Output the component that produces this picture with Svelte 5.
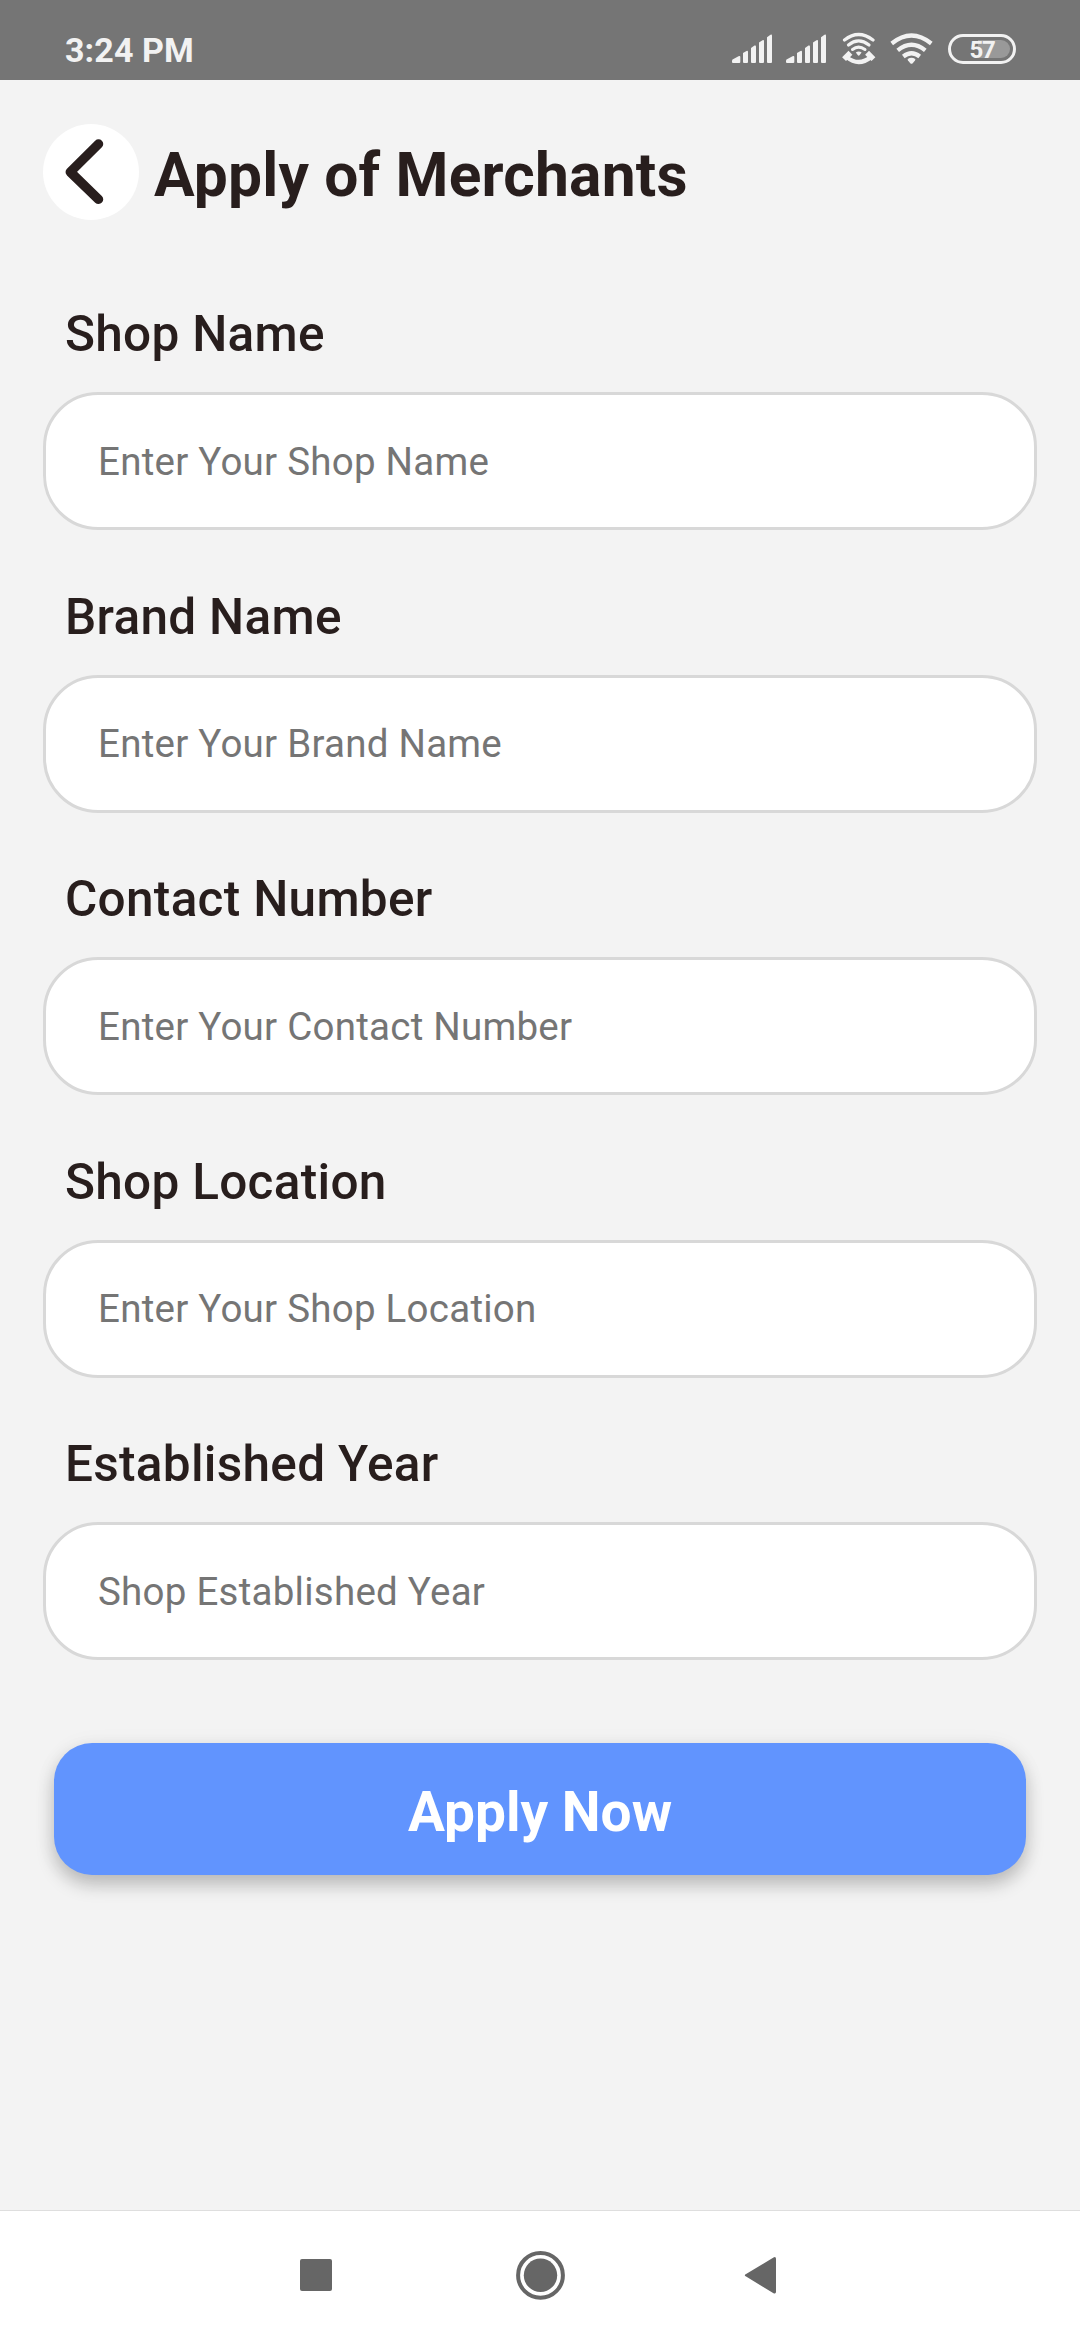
<script>
  const fields = [
    { id: 'shop', label: 'Shop Name', hint: 'Enter Your Shop Name' },
    { id: 'brand', label: 'Brand Name', hint: 'Enter Your Brand Name' },
    { id: 'contact', label: 'Contact Number', hint: 'Enter Your Contact Number' },
    { id: 'location', label: 'Shop Location', hint: 'Enter Your Shop Location' },
    { id: 'year', label: 'Established Year', hint: 'Shop Established Year' }
  ];
</script>

{#snippet signal()}
  <svg class="signal" width="41" height="30" viewBox="0 0 41 30">
    <path d="M0.5 25.5L7 22Q8.3 21.600 8.300 23V28Q8.300 29 7.300 29H1Q0 29 0 28V26.500Z" />
    <path d="M11 19L14.500 17Q16 16.300 16 18V28Q16 29 15 29H12Q11 29 11 28Z" />
    <path d="M19 14L22.500 11.600Q24 11 24 12.500V28Q24 29 23 29H20Q19 29 19 28Z" />
    <path d="M27 8.500L30.500 6.300Q32 5.600 32 7V28Q32 29 31 29H28Q27 29 27 28Z" />
    <path d="M35 3.300L38.500 0.700Q40 0 40 1.500V28Q40 29 39 29H36Q35 29 35 28Z" />
  </svg>
{/snippet}

<div class="screen">
  <div class="status">
    <span class="time">3:24 PM</span>
    <div class="indicators">
      {@render signal()}
      <span class="second">{@render signal()}</span>
      <svg class="wificall" width="34" height="33" viewBox="0 0 34 33">
        <g fill="none" stroke="#f2f2f2" stroke-linecap="round">
          <path d="M2.500 8Q16.500 -3 31 8" stroke-width="3.200" />
          <path d="M6.500 13Q16.500 4.900 27 13" stroke-width="3.200" />
          <path d="M10.500 17.500Q16.500 12.800 23 17.500" stroke-width="3" />
          <path d="M4.500 25Q16.700 35 29 25" stroke-width="4.200" stroke-linecap="butt" />
          <path d="M4 25.200L6.500 22.700M29.500 25.200L27 22.700" stroke-width="5.500" stroke-linecap="square" />
        </g>
        <path d="M13.800 20.500Q16.700 18.300 19.600 20.500L17.700 23.100Q16.700 24.200 15.700 23.100Z" />
      </svg>
      <svg class="wifi" width="43" height="32" viewBox="0 0 43 32">
        <g fill="none" stroke="#f2f2f2" stroke-width="4.200" stroke-linecap="butt">
          <path d="M1.700 10.500Q21.500 -5.500 41.300 10.500" />
          <path d="M7.700 17.300Q21.500 6.200 35.300 17.300" />
          <path d="M13.300 23.500Q21.500 17 29.700 23.500" />
        </g>
        <path d="M17.700 26Q21.500 23.500 25.300 26Q25.500 26.800 25 27.500L22.700 30.200Q21.500 31.300 20.300 30.200L18 27.500Q17.500 26.800 17.700 26Z" />
      </svg>
      <div class="battery"><i class="level"></i><span>57</span></div>
    </div>
  </div>

  <main>
    <header>
      <button class="back" aria-label="Back">
        <svg width="96" height="96" viewBox="0 0 96 96">
          <path d="M55.500 20L27.300 48L55.500 75.300" />
        </svg>
      </button>
      <h1>Apply of Merchants</h1>
    </header>

    <form>
      {#each fields as field (field.id)}
        <div class="field">
          <label for={field.id}>{field.label}</label>
          <input id={field.id} type="text" placeholder={field.hint} />
        </div>
      {/each}
      <button class="apply" type="button">Apply Now</button>
    </form>
  </main>

  <nav>
    <svg width="1080" height="129" viewBox="0 0 1080 129">
      <rect x="300" y="48" width="32" height="32" rx="2" />
      <circle cx="540.500" cy="64.300" r="22.400" fill="none" stroke="#666" stroke-width="4" />
      <circle cx="540.500" cy="64.300" r="16.700" />
      <path d="M746.500 65.800L773.500 82.200Q776 83.300 776 80.800V47.800Q776 45.300 773.500 46.400L746.500 62.800Q743 64.300 746.500 65.800Z" />
    </svg>
  </nav>
</div>

<style>
  :global(body) {
    margin: 0;
    background: #f3f3f3;
  }
  .screen {
    box-sizing: border-box;
    width: 1080px;
    height: 2340px;
    display: flex;
    flex-direction: column;
    overflow: hidden;
    background: #f3f3f3;
    color: #281e1d;
    font-family: Roboto, sans-serif;
  }
  .status {
    box-sizing: border-box;
    flex: none;
    height: 80px;
    padding: 30px 64px 0 65px;
    display: flex;
    justify-content: space-between;
    background: #757575;
    color: #f2f2f2;
  }
  .time {
    font-size: 34px;
    line-height: 40px;
    font-weight: 700;
    letter-spacing: 0.1px;
  }
  .indicators {
    display: flex;
    align-items: flex-start;
  }
  svg {
    display: block;
    fill: #f2f2f2;
  }
  .signal {
    margin-top: 4px;
  }
  .second {
    margin-left: 13px;
  }
  .wificall {
    margin: 2px 0 0 15px;
  }
  .wifi {
    margin: 3px 0 0 14px;
  }
  .battery {
    box-sizing: border-box;
    position: relative;
    width: 68px;
    height: 30px;
    margin: 4px 0 0 15px;
    border: 3px solid #f2f2f2;
    border-radius: 15px;
    text-align: center;
    font-size: 24px;
    line-height: 26px;
    font-weight: 700;
    letter-spacing: -1.200px;
  }
  .battery span {
    position: relative;
  }
  .level {
    position: absolute;
    left: 27px;
    right: 3px;
    top: 3px;
    bottom: 3px;
    border-radius: 0 9px 9px 0;
    background: #999;
  }
  main {
    flex: 1;
    padding: 44px 43px 0;
  }
  header {
    display: flex;
    align-items: center;
    gap: 15px;
    height: 96px;
  }
  button {
    border: 0;
    padding: 0;
    font-family: inherit;
  }
  .back {
    width: 96px;
    height: 96px;
    border-radius: 50%;
    background: #fff;
  }
  .back path {
    fill: none;
    stroke: #281e1d;
    stroke-width: 9.500;
    stroke-linecap: round;
    stroke-linejoin: round;
  }
  h1 {
    margin: 6px 0 0;
    font-size: 60.500px;
    line-height: 71px;
    font-weight: 700;
    letter-spacing: 0.170px;
    white-space: nowrap;
  }
  form {
    display: flex;
    flex-direction: column;
    padding-top: 85px;
  }
  .field {
    height: 282.500px;
    display: flex;
    flex-direction: column;
    gap: 29px;
  }
  label {
    height: 58px;
    padding-left: 22px;
    font-size: 49.500px;
    line-height: 58px;
    font-weight: 500;
    letter-spacing: 0.300px;
  }
  input {
    box-sizing: border-box;
    width: 994px;
    height: 138px;
    margin: 0;
    padding: 0 52px;
    border: 3px solid #d8d8d8;
    border-radius: 55px;
    background: #fff;
    font-family: inherit;
    font-size: 38.500px;
    letter-spacing: 0.250px;
    color: #281e1d;
    outline: none;
  }
  input::placeholder {
    color: #757575;
    opacity: 1;
  }
  .apply {
    box-sizing: border-box;
    height: 132px;
    margin: 25px 11px 0;
    padding-top: 6px;
    border-radius: 38px;
    background: #6194fe;
    box-shadow: 0 10px 18px rgba(0, 0, 0, 0.22), 0 2px 22px rgba(0, 0, 0, 0.05);
    color: #fff;
    font-size: 55px;
    line-height: 64px;
    font-weight: 700;
  }
  nav {
    flex: none;
    height: 129px;
    border-top: 1px solid #dedede;
    background: #fff;
  }
  nav svg {
    fill: #666;
  }
</style>
